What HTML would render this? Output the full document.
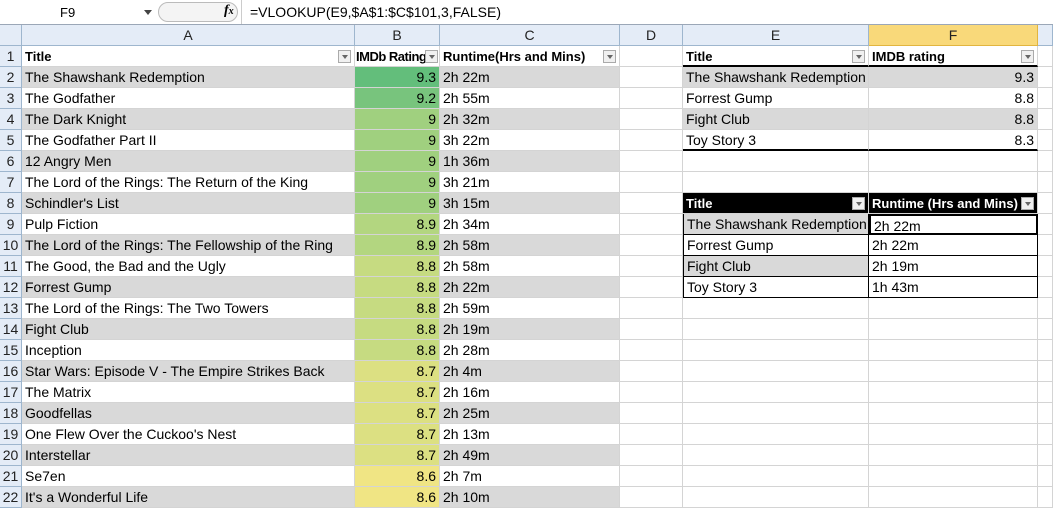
<html><head><style>
body{margin:0;width:1053px;height:501px;overflow:hidden;background:#fff;font-family:"Liberation Sans",sans-serif;font-size:14px;position:relative}
.fb{position:absolute;left:0;top:0;width:1053px;height:24px;background:#fff;border-bottom:1px solid #9ba7b7;}
.row{position:absolute;left:0;width:1053px;height:21px}
.row>div{position:absolute;top:0;height:21px;box-sizing:border-box;border-right:1px solid #d4d4d4;border-bottom:1px solid #d4d4d4;padding:0 3px;white-space:nowrap;overflow:hidden;line-height:21px}
.c0{left:0;width:22px;background:#e4ecf7;border-color:#9eb6ce!important;text-align:center;padding:0!important;color:#222}
.cA{left:22px;width:333px}.cB{left:355px;width:85px}.cC{left:440px;width:180px}.cD{left:620px;width:63px}.cE{left:683px;width:186px}.cF{left:869px;width:169px}.cG{left:1038px;width:15px}
.h>div{background:#e4ecf7;border-color:#9eb6ce;text-align:center;color:#222}
.g{background:#d9d9d9}
.n{text-align:right}
.dd{position:absolute;right:3px;top:4px;width:13px;height:13px;box-sizing:border-box;border:1px solid #aaa;background:#f0f0f0}
.dd:after{content:"";position:absolute;left:3px;top:4px;border:3px solid transparent;border-top:4px solid #666}
.k{background:#000;color:#fff;font-weight:bold;font-size:13px}
b{font-weight:bold;font-size:13px}
</style></head><body>
<div class="fb">
<div style="position:absolute;left:60px;top:5px;font-size:13px">F9</div>
<div style="position:absolute;left:144px;top:10px;border:4px solid transparent;border-top:5px solid #444"></div>
<div style="position:absolute;left:158px;top:2px;width:80px;height:20px;box-sizing:border-box;border:1px solid #bbb;border-radius:10px;background:#f4f4f4"></div>
<div style="position:absolute;left:224px;top:3px;font-style:italic;font-family:'Liberation Serif';font-size:14px;font-weight:bold">f<span style="font-size:10px">x</span></div>
<div style="position:absolute;left:241px;top:0;width:1px;height:24px;background:#ccc"></div>
<div style="position:absolute;left:250px;top:4px;font-size:14px">=VLOOKUP(E9,$A$1:$C$101,3,FALSE)</div>
</div>
<div class="row h" style="top:25px"><div class="c0"></div><div class="cA">A</div><div class="cB">B</div><div class="cC">C</div><div class="cD">D</div><div class="cE">E</div><div class="cF" style="background:#f9d97a;border-color:#e2b53f">F</div><div class="cG"></div></div>

<div class="row" style="top:46px"><div class="c0">1</div><div class="cA"><b>Title</b><span class="dd"></span></div><div class="cB" style="padding:0 1px"><b style="letter-spacing:-0.5px">IMDb Rating</b><span class="dd" style="right:1px"></span></div><div class="cC"><b>Runtime(Hrs and Mins)</b><span class="dd"></span></div><div class="cD"></div><div class="cE" style="border-bottom:2px solid #000"><b>Title</b><span class="dd"></span></div><div class="cF" style="border-bottom:2px solid #000"><b>IMDB rating</b><span class="dd"></span></div><div class="cG"></div></div>
<div class="row" style="top:67px"><div class="c0">2</div><div class="cA g">The Shawshank Redemption</div><div class="cB n" style="background:#63be7b">9.3</div><div class="cC g">2h 22m</div><div class="cD"></div><div class="cE g">The Shawshank Redemption</div><div class="cF g n">9.3</div><div class="cG"></div></div>
<div class="row" style="top:88px"><div class="c0">3</div><div class="cA">The Godfather</div><div class="cB n" style="background:#78c47d">9.2</div><div class="cC">2h 55m</div><div class="cD"></div><div class="cE">Forrest Gump</div><div class="cF n">8.8</div><div class="cG"></div></div>
<div class="row" style="top:109px"><div class="c0">4</div><div class="cA g">The Dark Knight</div><div class="cB n" style="background:#a0d07f">9</div><div class="cC g">2h 32m</div><div class="cD"></div><div class="cE g">Fight Club</div><div class="cF g n">8.8</div><div class="cG"></div></div>
<div class="row" style="top:130px"><div class="c0">5</div><div class="cA">The Godfather Part II</div><div class="cB n" style="background:#a0d07f">9</div><div class="cC">3h 22m</div><div class="cD"></div><div class="cE" style="border-bottom:2px solid #000">Toy Story 3</div><div class="cF n" style="border-bottom:2px solid #000">8.3</div><div class="cG"></div></div>
<div class="row" style="top:151px"><div class="c0">6</div><div class="cA g">12 Angry Men</div><div class="cB n" style="background:#a0d07f">9</div><div class="cC g">1h 36m</div><div class="cD"></div><div class="cE"></div><div class="cF"></div><div class="cG"></div></div>
<div class="row" style="top:172px"><div class="c0">7</div><div class="cA">The Lord of the Rings: The Return of the King</div><div class="cB n" style="background:#a0d07f">9</div><div class="cC">3h 21m</div><div class="cD"></div><div class="cE"></div><div class="cF"></div><div class="cG"></div></div>
<div class="row" style="top:193px"><div class="c0">8</div><div class="cA g">Schindler's List</div><div class="cB n" style="background:#a0d07f">9</div><div class="cC g">3h 15m</div><div class="cD"></div><div class="cE k">Title<span class="dd"></span></div><div class="cF k">Runtime (Hrs and Mins)<span class="dd"></span></div><div class="cG"></div></div>
<div class="row" style="top:214px"><div class="c0">9</div><div class="cA">Pulp Fiction</div><div class="cB n" style="background:#b3d680">8.9</div><div class="cC">2h 34m</div><div class="cD"></div><div class="cE g" style="border-left:1px solid #000;border-color:#000">The Shawshank Redemption</div><div class="cF" style="border:2px solid #000">2h 22m</div><div class="cG"></div></div>
<div class="row" style="top:235px"><div class="c0">10</div><div class="cA g">The Lord of the Rings: The Fellowship of the Ring</div><div class="cB n" style="background:#b3d680">8.9</div><div class="cC g">2h 58m</div><div class="cD"></div><div class="cE" style="border-left:1px solid #000;border-color:#000">Forrest Gump</div><div class="cF" style="border-color:#000">2h 22m</div><div class="cG"></div></div>
<div class="row" style="top:256px"><div class="c0">11</div><div class="cA">The Good, the Bad and the Ugly</div><div class="cB n" style="background:#c6db81">8.8</div><div class="cC">2h 58m</div><div class="cD"></div><div class="cE g" style="border-left:1px solid #000;border-color:#000">Fight Club</div><div class="cF" style="border-color:#000">2h 19m</div><div class="cG"></div></div>
<div class="row" style="top:277px"><div class="c0">12</div><div class="cA g">Forrest Gump</div><div class="cB n" style="background:#c6db81">8.8</div><div class="cC g">2h 22m</div><div class="cD"></div><div class="cE" style="border-left:1px solid #000;border-color:#000">Toy Story 3</div><div class="cF" style="border-color:#000">1h 43m</div><div class="cG"></div></div>
<div class="row" style="top:298px"><div class="c0">13</div><div class="cA">The Lord of the Rings: The Two Towers</div><div class="cB n" style="background:#c6db81">8.8</div><div class="cC">2h 59m</div><div class="cD"></div><div class="cE"></div><div class="cF"></div><div class="cG"></div></div>
<div class="row" style="top:319px"><div class="c0">14</div><div class="cA g">Fight Club</div><div class="cB n" style="background:#c6db81">8.8</div><div class="cC g">2h 19m</div><div class="cD"></div><div class="cE"></div><div class="cF"></div><div class="cG"></div></div>
<div class="row" style="top:340px"><div class="c0">15</div><div class="cA">Inception</div><div class="cB n" style="background:#c6db81">8.8</div><div class="cC">2h 28m</div><div class="cD"></div><div class="cE"></div><div class="cF"></div><div class="cG"></div></div>
<div class="row" style="top:361px"><div class="c0">16</div><div class="cA g">Star Wars: Episode V - The Empire Strikes Back</div><div class="cB n" style="background:#dce082">8.7</div><div class="cC g">2h 4m</div><div class="cD"></div><div class="cE"></div><div class="cF"></div><div class="cG"></div></div>
<div class="row" style="top:382px"><div class="c0">17</div><div class="cA">The Matrix</div><div class="cB n" style="background:#dce082">8.7</div><div class="cC">2h 16m</div><div class="cD"></div><div class="cE"></div><div class="cF"></div><div class="cG"></div></div>
<div class="row" style="top:403px"><div class="c0">18</div><div class="cA g">Goodfellas</div><div class="cB n" style="background:#dce082">8.7</div><div class="cC g">2h 25m</div><div class="cD"></div><div class="cE"></div><div class="cF"></div><div class="cG"></div></div>
<div class="row" style="top:424px"><div class="c0">19</div><div class="cA">One Flew Over the Cuckoo's Nest</div><div class="cB n" style="background:#dce082">8.7</div><div class="cC">2h 13m</div><div class="cD"></div><div class="cE"></div><div class="cF"></div><div class="cG"></div></div>
<div class="row" style="top:445px"><div class="c0">20</div><div class="cA g">Interstellar</div><div class="cB n" style="background:#dce082">8.7</div><div class="cC g">2h 49m</div><div class="cD"></div><div class="cE"></div><div class="cF"></div><div class="cG"></div></div>
<div class="row" style="top:466px"><div class="c0">21</div><div class="cA">Se7en</div><div class="cB n" style="background:#f0e584">8.6</div><div class="cC">2h 7m</div><div class="cD"></div><div class="cE"></div><div class="cF"></div><div class="cG"></div></div>
<div class="row" style="top:487px"><div class="c0">22</div><div class="cA g">It's a Wonderful Life</div><div class="cB n" style="background:#f0e584">8.6</div><div class="cC g">2h 10m</div><div class="cD"></div><div class="cE"></div><div class="cF"></div><div class="cG"></div></div>
</body></html>
